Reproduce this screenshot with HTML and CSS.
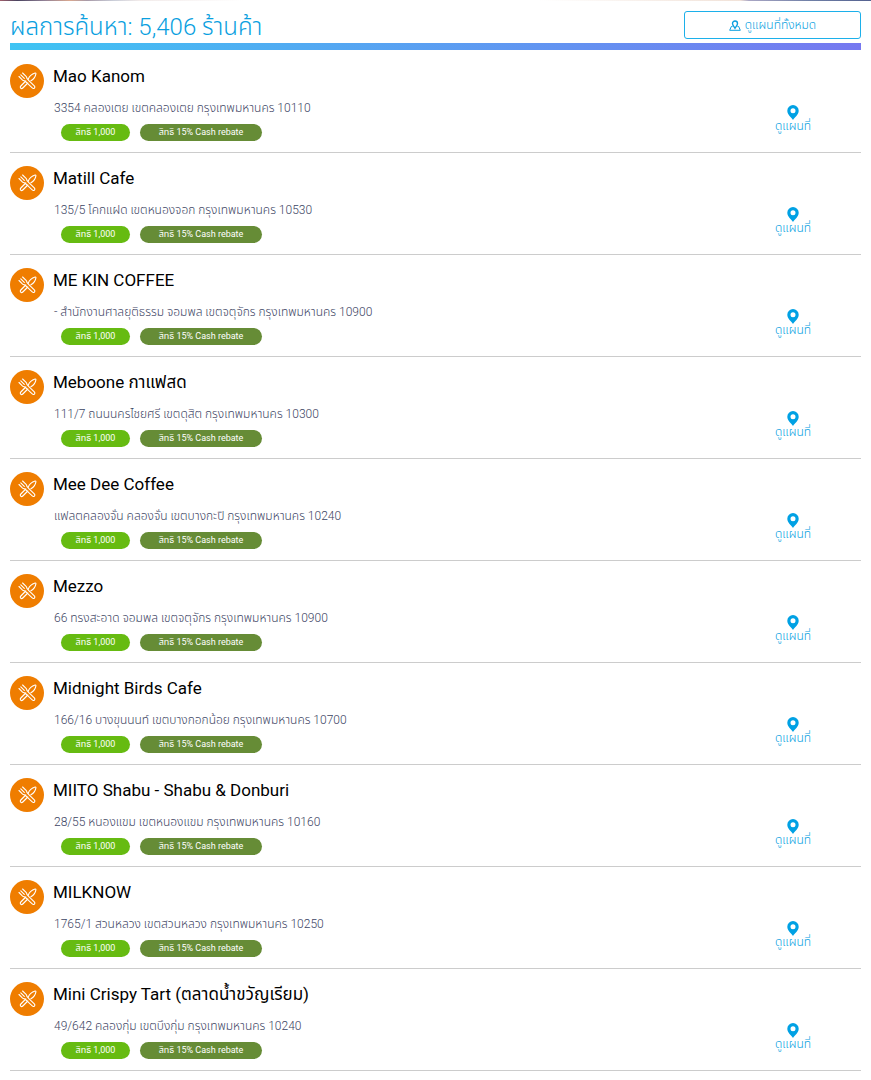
FILE: index.html
```
<!DOCTYPE html>
<html lang="th">
<head>
<meta charset="utf-8">
<meta name="viewport" content="width=device-width, initial-scale=1">
<title>ผลการค้นหา</title>
<link rel="stylesheet" href="styles.css">
</head>
<body>

<svg class="sprite" aria-hidden="true">
  <symbol id="food" viewBox="0 0 34 34">
    <g fill="none" stroke="#fff" stroke-width="1.1" stroke-linejoin="round" stroke-linecap="round">
      <path d="M9 12.500l3.600 3.600c.8.7 1.500.6 2.300.9l2.300 2.200 5 4.700c1.600 1.500 3.600-.5 2.100-2l-5.200-5-2-2.200c-.5-.8-.2-1.500-1-2.300L12.600 9M10.800 10.800l3.500 3.500"/>
      <path d="M18.200 15.200c1-2.700 3.800-5.300 6.900-6.200.6-.1.900.2.800.8-.5 3-2.500 5.600-5 7M15.800 17l-5 5c-1.500 1.600.5 3.500 2 2l5-5"/>
    </g>
  </symbol>
  <symbol id="pin" viewBox="0 0 12 15">
    <path fill="#00a1e4" fill-rule="evenodd" d="M6 0a5.700 5.700 0 0 1 5.700 5.700C11.700 9.500 7.500 12.500 6 15 4.500 12.500.3 9.500.3 5.700A5.700 5.700 0 0 1 6 0zm0 3.200a2.500 2.500 0 1 0 0 5 2.500 2.500 0 0 0 0-5z"/>
  </symbol>
</svg>

<div class="banner"></div>

<div class="container">
  <div class="result-head">
    <h1>ผลการค้นหา: 5,406 ร้านค้า</h1>
    <button type="button" class="btn-map">
      <svg width="12" height="11" viewBox="0 0 12 11" fill="none" stroke="#0a9fdf"><path d="M3.500 6.500H2.300L.7 10.300h10.600L9.700 6.500H8.500"/><path stroke-width="1.400" d="M6 8.300C5.300 6.900 3.500 5.500 3.500 3.500a2.500 2.500 0 0 1 5 0c0 2-1.800 3.400-2.500 4.800z"/></svg>
      ดูแผนที่ทั้งหมด
    </button>
  </div>

  <ul class="shops">
    <li>
      <svg class="icon"><use href="#food"/></svg>
      <div class="info">
        <h2>Mao Kanom</h2>
        <p>3354 คลองเตย เขตคลองเตย กรุงเทพมหานคร 10110</p>
        <div class="tags"><span class="tag">สิทธิ 1,000</span><span class="tag rebate">สิทธิ 15% Cash rebate</span></div>
      </div>
      <a href="#" class="map"><svg><use href="#pin"/></svg>ดูแผนที่</a>
    </li>
    <li>
      <svg class="icon"><use href="#food"/></svg>
      <div class="info">
        <h2>Matill Cafe</h2>
        <p>135/5 โคกแฝด เขตหนองจอก กรุงเทพมหานคร 10530</p>
        <div class="tags"><span class="tag">สิทธิ 1,000</span><span class="tag rebate">สิทธิ 15% Cash rebate</span></div>
      </div>
      <a href="#" class="map"><svg><use href="#pin"/></svg>ดูแผนที่</a>
    </li>
    <li>
      <svg class="icon"><use href="#food"/></svg>
      <div class="info">
        <h2>ME KIN COFFEE</h2>
        <p>- สำนักงานศาลยุติธรรม จอมพล เขตจตุจักร กรุงเทพมหานคร 10900</p>
        <div class="tags"><span class="tag">สิทธิ 1,000</span><span class="tag rebate">สิทธิ 15% Cash rebate</span></div>
      </div>
      <a href="#" class="map"><svg><use href="#pin"/></svg>ดูแผนที่</a>
    </li>
    <li>
      <svg class="icon"><use href="#food"/></svg>
      <div class="info">
        <h2>Meboone กาแฟสด</h2>
        <p>111/7 ถนนนครไชยศรี เขตดุสิต กรุงเทพมหานคร 10300</p>
        <div class="tags"><span class="tag">สิทธิ 1,000</span><span class="tag rebate">สิทธิ 15% Cash rebate</span></div>
      </div>
      <a href="#" class="map"><svg><use href="#pin"/></svg>ดูแผนที่</a>
    </li>
    <li>
      <svg class="icon"><use href="#food"/></svg>
      <div class="info">
        <h2>Mee Dee Coffee</h2>
        <p>แฟลตคลองจั่น คลองจั่น เขตบางกะปิ กรุงเทพมหานคร 10240</p>
        <div class="tags"><span class="tag">สิทธิ 1,000</span><span class="tag rebate">สิทธิ 15% Cash rebate</span></div>
      </div>
      <a href="#" class="map"><svg><use href="#pin"/></svg>ดูแผนที่</a>
    </li>
    <li>
      <svg class="icon"><use href="#food"/></svg>
      <div class="info">
        <h2>Mezzo</h2>
        <p>66 ทรงสะอาด จอมพล เขตจตุจักร กรุงเทพมหานคร 10900</p>
        <div class="tags"><span class="tag">สิทธิ 1,000</span><span class="tag rebate">สิทธิ 15% Cash rebate</span></div>
      </div>
      <a href="#" class="map"><svg><use href="#pin"/></svg>ดูแผนที่</a>
    </li>
    <li>
      <svg class="icon"><use href="#food"/></svg>
      <div class="info">
        <h2>Midnight Birds Cafe</h2>
        <p>166/16 บางขุนนนท์ เขตบางกอกน้อย กรุงเทพมหานคร 10700</p>
        <div class="tags"><span class="tag">สิทธิ 1,000</span><span class="tag rebate">สิทธิ 15% Cash rebate</span></div>
      </div>
      <a href="#" class="map"><svg><use href="#pin"/></svg>ดูแผนที่</a>
    </li>
    <li>
      <svg class="icon"><use href="#food"/></svg>
      <div class="info">
        <h2>MIITO Shabu - Shabu &amp; Donburi</h2>
        <p>28/55 หนองแขม เขตหนองแขม กรุงเทพมหานคร 10160</p>
        <div class="tags"><span class="tag">สิทธิ 1,000</span><span class="tag rebate">สิทธิ 15% Cash rebate</span></div>
      </div>
      <a href="#" class="map"><svg><use href="#pin"/></svg>ดูแผนที่</a>
    </li>
    <li>
      <svg class="icon"><use href="#food"/></svg>
      <div class="info">
        <h2>MILKNOW</h2>
        <p>1765/1 สวนหลวง เขตสวนหลวง กรุงเทพมหานคร 10250</p>
        <div class="tags"><span class="tag">สิทธิ 1,000</span><span class="tag rebate">สิทธิ 15% Cash rebate</span></div>
      </div>
      <a href="#" class="map"><svg><use href="#pin"/></svg>ดูแผนที่</a>
    </li>
    <li>
      <svg class="icon"><use href="#food"/></svg>
      <div class="info">
        <h2>Mini Crispy Tart (ตลาดน้ำขวัญเรียม)</h2>
        <p>49/642 คลองกุ่ม เขตบึงกุ่ม กรุงเทพมหานคร 10240</p>
        <div class="tags"><span class="tag">สิทธิ 1,000</span><span class="tag rebate">สิทธิ 15% Cash rebate</span></div>
      </div>
      <a href="#" class="map"><svg><use href="#pin"/></svg>ดูแผนที่</a>
    </li>
  </ul>
</div>

</body>
</html>
```
FILE: styles.css
```
*{box-sizing:border-box;margin:0;padding:0;}
body{background:#fff;color:#000;font-family:Roboto,"Noto Sans Thai",sans-serif;}
ul{list-style:none;}
a{text-decoration:none;}
.sprite{display:none;}

.banner{height:1px;background:linear-gradient(90deg,#a0606c,#4a4460 2%,#8f7f95 5%,#d9a890 8%,#a89aa8 10%,#c9cdd8 13%,#f2ebea 16%,#fff 28%,#fff 62%,#f1e2d8 85%,#a9a6c4 86%,#6f7fa6 93%,#54618f);}
.container{padding:0 10px;}

.result-head{display:flex;justify-content:space-between;align-items:flex-start;height:49px;padding-top:10px;border-bottom:7px solid;border-image:linear-gradient(90deg,#3fc4f3,#7678f0) 1;}
.result-head h1{font-size:24px;line-height:32px;font-weight:300;color:#0a9fdf;white-space:nowrap;}
.btn-map{display:flex;justify-content:center;align-items:center;gap:4px;width:177px;height:28px;background:#fff;border:1px solid #1cb0ea;border-radius:3px;font:300 12px/20px Roboto,"Noto Sans Thai",sans-serif;color:#0a9fdf;cursor:pointer;}

.shops{padding-top:1px;}
.shops li{display:flex;height:102px;border-bottom:1px solid #ccc;}
.icon{flex:none;width:34px;height:34px;margin-top:13px;border-radius:50%;background:#ef7d00;}
.info{flex:1;padding:14px 0 0 9px;}
.info h2{font-size:17px;line-height:22px;font-weight:400;}
.info p{padding:11px 0 0 1px;font-size:12px;line-height:20px;font-weight:300;color:#3c4463;}
.tags{display:flex;gap:10px;padding:6px 0 0 8px;}
.tag{width:69px;height:17px;border-radius:9px;background:#66bb11;color:#fff;font-size:9px;line-height:17px;text-align:center;white-space:nowrap;}
.rebate{width:122px;background:#668c36;}
.map{display:flex;flex-direction:column;align-items:center;width:136px;padding-top:54px;font-size:12px;line-height:13px;font-weight:300;color:#0a9fdf;}
.map svg{width:12px;height:15px;}
```
